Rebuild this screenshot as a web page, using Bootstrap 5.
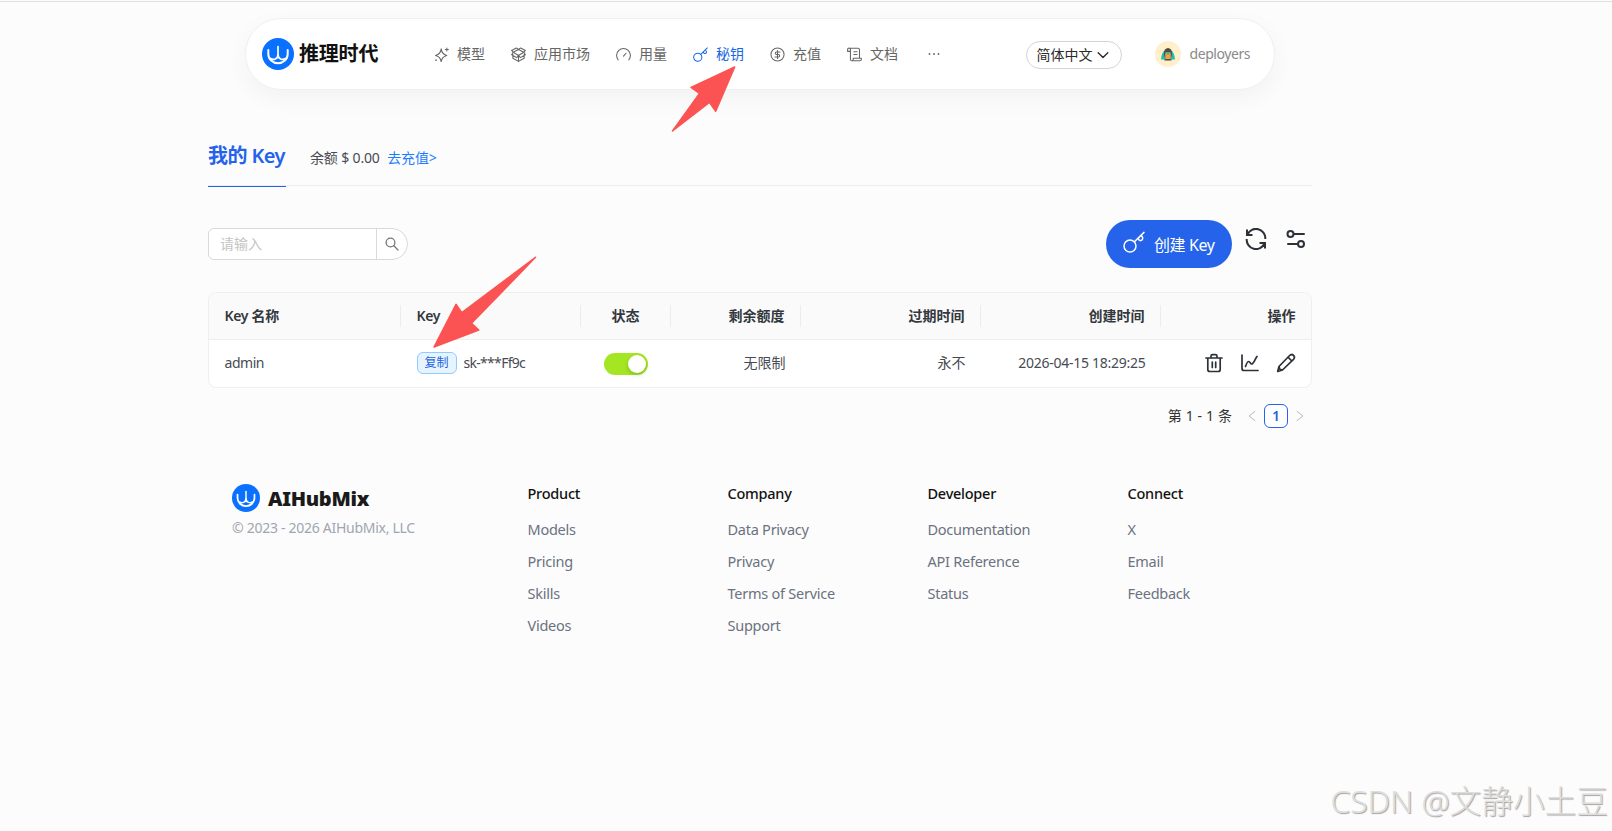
<!DOCTYPE html>
<html lang="zh-CN">
<head>
<meta charset="utf-8">
<meta name="viewport" content="width=device-width, initial-scale=1">
<title>我的 Key</title>
<link href="https://cdn.jsdelivr.net/npm/bootstrap@5.3.0/dist/css/bootstrap.min.css" rel="stylesheet">
<style>
body{background:#fcfcfc;color:#474b53;font-family:"Noto Sans","Noto Sans CJK SC",sans-serif;font-size:14px;line-height:22px;height:831px;overflow:hidden;position:relative}
a{text-decoration:none}
svg{display:block;flex:none}
.ico{fill:none;stroke:currentColor;stroke-linecap:round;stroke-linejoin:round}
.topline{height:2px;border-bottom:1px solid #dfe0e0}
.pill{width:1030px;height:72px;margin:16px 0 0 245px;background:#fff;border:1px solid #f0f0f0;border-radius:36px;box-shadow:0 8px 24px rgba(0,0,0,.045);padding:0 24px 0 16px}
.brandname{font-size:20px;font-weight:700;color:#111;letter-spacing:-.2px;margin-left:5px;width:135px;white-space:nowrap}
.menu{gap:26px;color:#666}
.menu a{color:inherit;gap:8px}
.menu a.active{color:#1769e0}
.lang{width:96px;height:28px;border:1px solid #d4d4d4;border-radius:14px;color:#2b2b2b;background:#fff;padding:0 0 0 10px;font-size:14px;gap:4px;margin-top:1px}
.avatar{margin-left:33px}
.user{color:#8a8a8a;letter-spacing:-.45px;margin-left:9px}
.page{width:1104px;margin-left:208px;padding-top:19px}
.tabs{height:77px;border-bottom:1px solid #ececec}
.tabname{font-size:20px;font-weight:600;color:#2563eb;width:78px;height:78px;line-height:94px;border-bottom:1px solid #2563eb;letter-spacing:-.6px;white-space:nowrap}
.tabs .bal{line-height:98px;letter-spacing:-.15px;margin-left:24px;white-space:nowrap}
.tabs .bal a{color:#1a7dff;margin-left:4px}
.search{width:200px;height:32px;margin-top:8px}
.search .form-control{font-size:14px;line-height:22px;border:1px solid #d9d9d9;border-radius:6px 0 0 6px;padding:4px 11px}
.search .form-control::placeholder{color:#c4c4c4}
.search .btn{width:32px;border:1px solid #d9d9d9;border-radius:0 16px 16px 0;background:#fff;padding:0;color:#777}
.toolbar{margin-top:34px;height:48px}
.create{width:126px;height:48px;border-radius:24px;background:#2563eb;color:#fff;font-size:16px;padding:0 0 0 17px;letter-spacing:-.4px;gap:9px;border:0}
.create svg{margin-top:-5px}
.create span{margin-top:2px;white-space:nowrap}
.refresh{margin:8px 0 0 13px;color:#2d3138}
.sliders{margin:9px 6px 0 19px;color:#2d3138}
.keybox{margin-top:24px;height:96px;border:1px solid #efefef;border-radius:8px;background:#fff;overflow:hidden}
.gridrow{display:grid;grid-template-columns:192px 180px 90px 130px 180px 180px 150px;align-items:center;height:46px;white-space:nowrap}
.gridrow>div{padding:0 15.500px 0 15.500px}
.headrow{height:47px;padding-bottom:1px;background:#fafafa;border-bottom:1px solid #efefef;font-weight:600;color:#33373e}
.headrow>div:not(:last-child){border-right:1px solid #ececec}
.lat{letter-spacing:-.45px}
.headrow .lat{letter-spacing:-.3px}
.masked{letter-spacing:-.7px}
.stamp{letter-spacing:-.27px}
.copy{width:40px;height:22px;border:1px solid #91caff;background:#e6f4ff;color:#1d63e0;font-size:12px;line-height:20px;border-radius:6px;margin-right:7px}
.toggle{width:44px;height:22px;border-radius:11px;background:#a3e621;padding:2px;margin-top:1px}
.toggle i{width:18px;height:18px;border-radius:9px;background:#fff;box-shadow:0 2px 4px rgba(0,35,11,.2)}
.acts{gap:16px;color:#2d3138}
.pager{margin-top:16px;height:24px;color:#333;padding-right:8px}
.pager .total{margin-right:16px;word-spacing:.3px}
.pager svg{color:#b8b8b8}
.pager .num{width:24px;height:24px;border:1px solid #2563eb;border-radius:6px;background:#fff;color:#2563eb;font-weight:600;line-height:22px;margin:0 8px}
.foot{margin-top:54px;padding-left:24px}
.foot .logo-col{width:295.500px;flex:none}
.foot .name{font-size:20px;font-weight:900;color:#1a1a1a;letter-spacing:-.3px;margin-left:8px;line-height:28px;padding-top:3px}
.foot .cp{color:#a0a6b1;margin-top:4px;letter-spacing:-.28px}
.foot .links{width:200px;flex:none;font-size:14.5px;line-height:32px;letter-spacing:-.25px}
.foot .links a{display:block;color:#6b7280}
.foot .links h6{font-size:14.5px;line-height:32px;font-weight:500;color:#111;margin:-5px 0 4px}
.arrows{position:absolute;left:0;top:0;pointer-events:none}
.wm{position:absolute;right:4px;bottom:10px;font-size:31.700px;line-height:40px;font-weight:300;color:#dedede;text-shadow:1px 1px 1px #a2a2a2;white-space:nowrap}
</style>
</head>
<body>
<svg width="0" height="0" class="position-absolute">
<defs>
<symbol id="logo" viewBox="0 0 32 32"><circle cx="16" cy="16" r="16" fill="#0a70ff"/><g fill="none" stroke="#fff" stroke-linecap="round"><path d="M6.300 12v4a9.700 9.300 0 0 0 19.400 0V12" stroke-width="2"/><path d="M16 8.600v9" stroke-width="1.700"/><path d="M16 17C15.800 21 11.500 22.500 8.500 20.500M16 17c.2 4 4.500 5.500 7.500 3.500" stroke-width="1.800"/></g></symbol>
<symbol id="keyi" viewBox="0 0 22 22"><circle cx="7" cy="15" r="6"/><path d="M11.400 10.800 21 1.400M15.300 7c.2 1.800 1 2.900 2.500 2.600 1.600-.3 2.300-2 1.600-3.400-.3-.6-.8-1.200-1.400-1.800"/></symbol>
</defs>
</svg>
<div class="topline"></div>
<nav class="pill d-flex align-items-center">
  <svg width="32" height="32"><use href="#logo"/></svg>
  <span class="brandname">推理时代</span>
  <div class="menu d-flex align-items-center">
    <a href="#" class="d-flex align-items-center"><svg class="ico" width="15" height="15" viewBox="0 0 24 24" stroke-width="1.700"><path d="M11.500 3C12.300 9 14.500 12 20.500 13.500 14.500 15 12.300 17.500 11.500 23.500 10.700 17.500 8.500 15 2.500 13.500 8.500 12 10.700 9 11.500 3zM20.500 1.500v5M18 4h5M2.500 21h1.500"/></svg>模型</a>
    <a href="#" class="d-flex align-items-center"><svg class="ico" width="15" height="15" viewBox="0 0 24 24" stroke-width="1.700"><path d="M3 12v6l9 5 9-5v-6M12 13.500V23M12 13.500l-3 3.500-8-4.500 2.500-4M12 13.500l3 3.500 8-4.500-2.500-4M3.500 8.500 12 13.500l8.500-5M3.500 8.500 1 5.500 8.500 1.500 12 4l3.500-2.500L23 5.500l-2.500 3M12 4 3.500 8.500M12 4l8.500 4.500"/></svg>应用市场</a>
    <a href="#" class="d-flex align-items-center"><svg class="ico" width="15" height="15" viewBox="0 0 24 24" stroke-width="1.700"><path d="M3.500 20.500a11 11 0 1 1 17 0M12 14.500l4-4.500"/></svg>用量</a>
    <a href="#" class="active d-flex align-items-center"><svg class="ico" width="15" height="15" stroke-width="1.500"><use href="#keyi"/></svg>秘钥</a>
    <a href="#" class="d-flex align-items-center"><svg class="ico" width="15" height="15" viewBox="0 0 24 24" stroke-width="1.700"><circle cx="12" cy="12" r="10.500"/><path d="M16 8h-5.500a2 2 0 0 0 0 4h3a2 2 0 0 1 0 4H8M12 5.500v13"/></svg>充值</a>
    <a href="#" class="d-flex align-items-center"><svg class="ico" width="15" height="15" viewBox="0 0 24 24" stroke-width="1.700"><path d="M16 12h-5M16 7.500h-5M20 17V4.500A2.500 2.500 0 0 0 17.500 2H3.500M7 22h13.500a2.500 2.500 0 0 0 2.500-2.500V18H10v1.500A2.500 2.500 0 0 1 7.500 22 2 2 0 0 1 5.500 19.500V4.500a2.300 2.300 0 1 0-4.500 0V7h4"/></svg>文档</a>
    <svg width="15" height="15" viewBox="0 0 15 15" fill="currentColor" class="ms-1"><circle cx="1.500" cy="7" r=".9"/><circle cx="6" cy="7" r=".9"/><circle cx="10.500" cy="7" r=".9"/></svg>
  </div>
  <button class="lang btn d-flex align-items-center ms-auto">简体中文<svg class="ico" width="12" height="12" viewBox="0 0 12 12" stroke-width="1.400"><path d="m1.200 3.700 4.800 4.800 4.800-4.800"/></svg></button>
  <svg class="avatar" width="26" height="26" viewBox="0 0 26 26"><circle cx="13" cy="13" r="13" fill="#ffefcb"/><path d="M6 18.500c.5-6 3-10.500 7-10.500s6.500 4.500 7 10.500z" fill="#28b9ae"/><ellipse cx="13" cy="12.500" rx="4" ry="5.500" fill="#56493f"/><path d="M10.300 12h5.400v4a2.700 2.700 0 0 1-5.400 0z" fill="#f2a043"/><path d="m10 11 3 3 3-3z" fill="#48aaa9"/><path d="M9.500 18.800h7" stroke="#594b42" stroke-width="1.500"/></svg>
  <span class="user">deployers</span>
</nav>

<main class="page">
  <div class="tabs d-flex">
    <div class="tabname">我的 Key</div>
    <div class="bal">余额 $ 0.00 <a href="#">去充值&gt;</a></div>
  </div>
  <div class="toolbar d-flex">
    <div class="search input-group flex-nowrap"><input class="form-control" placeholder="请输入"><button class="btn d-flex align-items-center justify-content-center"><svg class="ico" width="14" height="14" viewBox="0 0 14 14" stroke-width="1.300"><circle cx="5.500" cy="5.500" r="4.400"/><path d="m8.800 8.800 4.200 4.200"/></svg></button></div>
    <button class="create btn d-flex align-items-center ms-auto"><svg class="ico" width="22" height="22" stroke-width="1.500"><use href="#keyi"/></svg><span>创建 Key</span></button>
    <svg class="ico refresh" width="22" height="22" viewBox="0 0 22 22" stroke-width="2"><path d="M2 1.500V7h5.500M2.500 6.500A9.300 9.300 0 0 1 20.300 11M20 20.500V15h-5.500M19.500 15.500A9.300 9.300 0 0 1 1.700 11" stroke-linecap="butt" stroke-linejoin="miter"/></svg>
    <svg class="ico sliders" width="20" height="20" viewBox="0 0 20 20" stroke-width="2"><circle cx="4.500" cy="5" r="3"/><path d="M8 5h10M2 15h10"/><circle cx="15" cy="15" r="3"/></svg>
  </div>
  <div class="keybox">
    <div class="gridrow headrow">
      <div class="lat">Key 名称</div><div class="lat">Key</div><div class="text-center">状态</div><div class="text-end">剩余额度</div><div class="text-end">过期时间</div><div class="text-end">创建时间</div><div class="text-end">操作</div>
    </div>
    <div class="gridrow">
      <div class="lat">admin</div>
      <div class="d-flex align-items-center"><span class="copy text-center">复制</span><span class="masked">sk-***Ff9c</span></div>
      <div class="d-flex justify-content-center"><span class="toggle d-flex justify-content-end align-items-center"><i></i></span></div>
      <div class="text-end">无限制</div><div class="text-end">永不</div><div class="text-end stamp">2026-04-15 18:29:25</div>
      <div class="acts d-flex justify-content-end">
        <svg class="ico" width="20" height="20" viewBox="0 0 20 20" stroke-width="1.700"><path d="M2 5h16M3.800 5v11.500q0 2 2 2h8.400q2 0 2-2V5M7 5V3.300q0-1.600 1.600-1.600h2.800q1.600 0 1.600 1.600V5M8.300 9v5.500M11.700 9v5.500"/></svg>
        <svg class="ico" width="20" height="20" viewBox="0 0 20 20" stroke-width="1.700"><path d="M2 2v13.500q0 2 2 2h14M5.500 13.500c1-3 2-5 3.200-5 1.500 0 1.500 2.500 3 2.500 2 0 3-4.500 5.300-7.500"/></svg>
        <svg class="ico" width="20" height="20" viewBox="0 0 20 20" stroke-width="1.700"><path d="M13.600 2.500q2-2 3.900-.1t0 3.900L6.500 17 1.700 18.500l1.300-5zM12 4.200l3.800 3.800M3 13.500l.8 2.700 2.700.8"/></svg>
      </div>
    </div>
  </div>
  <div class="pager d-flex align-items-center justify-content-end">
    <span class="total">第 1 - 1 条</span>
    <svg class="ico" width="8" height="12" viewBox="0 0 8 12" stroke-width="1"><path d="M7 1.500 1 6l6 4.500"/></svg>
    <span class="num text-center">1</span>
    <svg class="ico" width="8" height="12" viewBox="0 0 8 12" stroke-width="1"><path d="m1 1.500 6 4.500-6 4.500"/></svg>
  </div>
  <footer class="foot d-flex">
    <div class="logo-col"><div class="d-flex align-items-center"><svg width="28" height="28"><use href="#logo"/></svg><span class="name">AIHubMix</span></div><div class="cp">© 2023 - 2026 AIHubMix, LLC</div></div>
    <div class="links"><h6>Product</h6><a href="#">Models</a><a href="#">Pricing</a><a href="#">Skills</a><a href="#">Videos</a></div>
    <div class="links"><h6>Company</h6><a href="#">Data Privacy</a><a href="#">Privacy</a><a href="#">Terms of Service</a><a href="#">Support</a></div>
    <div class="links"><h6>Developer</h6><a href="#">Documentation</a><a href="#">API Reference</a><a href="#">Status</a></div>
    <div class="links"><h6>Connect</h6><a href="#">X</a><a href="#">Email</a><a href="#">Feedback</a></div>
  </footer>
</main>
<svg class="arrows" width="1612" height="420" viewBox="0 0 1612 420" fill="#fb5353" stroke="#fb5353" stroke-width="1.500" stroke-linejoin="round"><path d="m734.700 67-19 44.300-6.300-9L672.500 131l27-37.500-8.500-6z"/><path d="M434 347 456 304.300 461.800 312.700 535.500 257.300 471.500 323.300 478.800 330z"/></svg>
<div class="wm">CSDN @文静小土豆</div>
<script src="https://cdn.jsdelivr.net/npm/bootstrap@5.3.0/dist/js/bootstrap.bundle.min.js"></script>
</body>
</html>
